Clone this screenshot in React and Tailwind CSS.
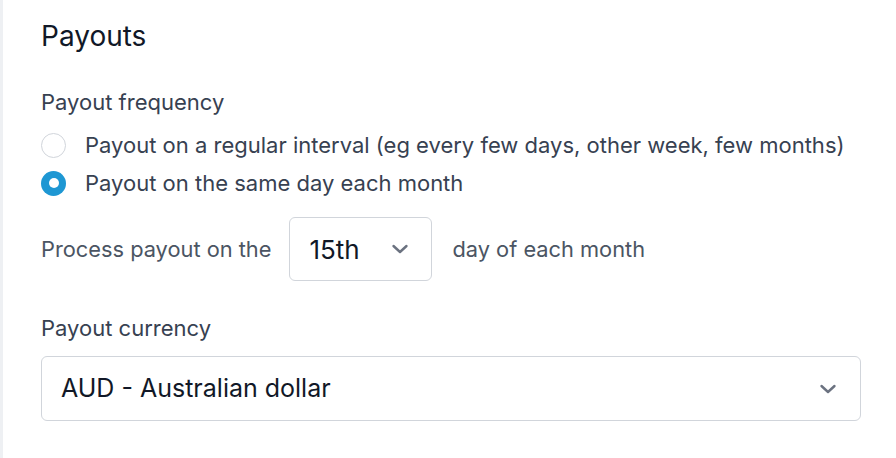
import React from "react";

function Chevron({ className }) {
  return (
    <svg className={className} width="20" height="20" viewBox="0 0 20 20" fill="none">
      <path d="M3.5 7l6.5 6 6.5-6" stroke="#6b7280" strokeWidth="2.4" strokeLinecap="round" strokeLinejoin="round" />
    </svg>
  );
}

export default function App() {
  return (
    <div className="w-[896px] h-[458px] bg-white flex" style={{ fontFamily: "Inter, 'Noto Sans', sans-serif" }}>
      <div className="w-[3px] bg-[#eef0f3]" />
      <div className="flex-1 pl-[38px] pr-[35px]">
        <h2 className="text-[28px] leading-[34px] text-[#111827] pt-[19px] font-normal">Payouts</h2>
        <div className="mt-[36px] text-[22px] leading-[26px] text-[#374151]">Payout frequency</div>
        <div className="mt-[11px] flex flex-col">
          <label className="flex items-center h-[38px]">
            <span className="w-[25px] h-[25px] rounded-full border border-[#d1d5db] bg-white" />
            <span className="ml-[19px] text-[22px] text-[#374151]">Payout on a regular interval (eg every few days, other week, few months)</span>
          </label>
          <label className="flex items-center h-[38px]">
            <span className="w-[25px] h-[25px] rounded-full bg-[#1e97d3] flex items-center justify-center">
              <span className="w-[10px] h-[10px] rounded-full bg-white" />
            </span>
            <span className="ml-[19px] text-[22px] text-[#374151]">Payout on the same day each month</span>
          </label>
        </div>
        <div className="mt-[15px] flex items-center">
          <span className="text-[21.8px] text-[#4b5563]">Process payout on the</span>
          <div className="ml-[18px] w-[143px] h-[64px] border border-[#d1d5db] rounded-[6px] flex items-center pl-[19px] pr-[21px] justify-between">
            <span className="text-[26px] text-[#111827]">15th</span>
            <Chevron />
          </div>
          <span className="ml-[20px] text-[21.8px] text-[#4b5563]">day of each month</span>
        </div>
        <div className="mt-[34px] text-[22px] leading-[26px] text-[#374151]">Payout currency</div>
        <div className="mt-[15px] h-[65px] border border-[#d1d5db] rounded-[6px] flex items-center justify-between pl-[19px] pr-[22px]">
          <span className="text-[25px] text-[#111827]">AUD - Australian dollar</span>
          <Chevron />
        </div>
      </div>
    </div>
  );
}
